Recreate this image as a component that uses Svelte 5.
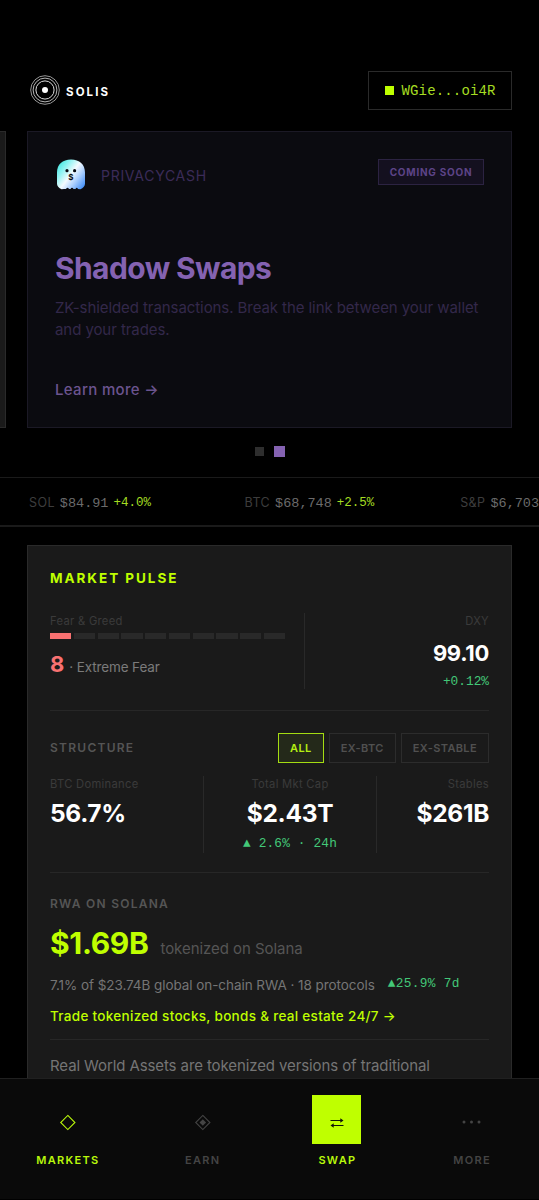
<script>
  const ticker = [
    { name: 'SOL', price: '$84.91', change: '+4.0%' },
    { name: 'BTC', price: '$68,748', change: '+2.5%' },
    { name: 'S&P', price: '$6,703', change: '' }
  ];
  const segments = Array.from({ length: 10 }, (_, i) => i < 1);
  const filters = ['ALL', 'EX-BTC', 'EX-STABLE'];
  let active = $state('ALL');
</script>

<div class="screen">
  <header>
    <div class="brand">
      <svg width="30" height="30" viewBox="0 0 30 30" fill="none" stroke="#fff">
        <circle cx="15" cy="15" r="14.3" stroke-width=".8" stroke="#bbb" />
        <circle cx="15" cy="15" r="11.9" stroke-width=".9" stroke="#ccc" />
        <circle cx="15" cy="15" r="9.1" stroke-width="1" stroke="#ddd" />
        <circle cx="15" cy="15" r="3" fill="#fff" stroke="none" />
      </svg>
      <span>SOLIS</span>
    </div>
    <button class="wallet"><i></i><span>WGie...oi4R</span></button>
  </header>

  <section class="slider">
    <div class="prev"></div>
    <article class="promo">
      <div class="promo-top">
        <svg class="ghost" width="30" height="32" viewBox="0 0 30 32">
          <defs>
            <linearGradient id="ghost" x1="0" y1="0.1" x2="1" y2="0.9">
              <stop offset="0" stop-color="#35e6de" />
              <stop offset=".25" stop-color="#8cf3f2" />
              <stop offset=".5" stop-color="#f4fbff" />
              <stop offset=".72" stop-color="#a9ceff" />
              <stop offset="1" stop-color="#3f8cf5" />
            </linearGradient>
          </defs>
          <path fill="url(#ghost)" d="M1 14.5C1 6.5 6.5 1.5 15 1.5S29 6.5 29 14.5V26Q28.5 29.5 24.5 31.2L22 31Q20.8 28.600 19.500 31H17.500Q16 28.600 14.500 31H13Q11.500 28.600 10 31H8L5.500 31.200Q1.500 29.500 1 26Z" />
          <circle cx="11" cy="12.7" r="1.6" fill="#080b12" />
          <circle cx="18.6" cy="12.7" r="1.6" fill="#080b12" />
          <text x="14.8" y="21.5" text-anchor="middle" font-family="Inter, sans-serif" font-size="8" font-weight="700" fill="#080b12">$</text>
        </svg>
        <span class="partner">PRIVACYCASH</span>
        <span class="soon">COMING SOON</span>
      </div>
      <h1>Shadow Swaps</h1>
      <p>ZK-shielded transactions. Break the link between your wallet and your trades.</p>
      <a class="learn" href="#learn">Learn more →</a>
    </article>
  </section>
  <div class="dots"><i></i><i class="on"></i></div>

  <div class="ticker">
    {#each ticker as t}
      <div><span class="name">{t.name}</span><span class="price">{t.price}</span>{#if t.change}<span class="change">{t.change}</span>{/if}</div>
    {/each}
  </div>

  <section class="pulse">
    <h2>MARKET PULSE</h2>
    <div class="mood">
      <div class="fear">
        <span class="label">Fear &amp; Greed</span>
        <div class="bar">{#each segments as on}<i class:on></i>{/each}</div>
        <div class="score"><b>8</b><span>· Extreme Fear</span></div>
      </div>
      <div class="dxy">
        <span class="label">DXY</span>
        <strong>99.10</strong>
        <span class="up">+0.12%</span>
      </div>
    </div>

    <div class="structure">
      <h3>STRUCTURE</h3>
      <div class="filters">
        {#each filters as f}
          <button class:active={active === f} onclick={() => (active = f)}>{f}</button>
        {/each}
      </div>
    </div>
    <div class="stats">
      <div><span class="label">BTC Dominance</span><strong>56.7%</strong></div>
      <div class="mid"><span class="label">Total Mkt Cap</span><strong>$2.43T</strong><span class="up">▲ 2.6% · 24h</span></div>
      <div class="end"><span class="label">Stables</span><strong>$261B</strong></div>
    </div>

    <div class="rwa">
      <h3>RWA ON SOLANA</h3>
      <div class="total"><b>$1.69B</b><span>tokenized on Solana</span></div>
      <div class="share"><span>7.1% of $23.74B global on-chain RWA · 18 protocols</span><span class="up">▲25.9% 7d</span></div>
      <a class="trade" href="#trade">Trade tokenized stocks, bonds &amp; real estate 24/7 →</a>
      <p>Real World Assets are tokenized versions of traditional</p>
    </div>
  </section>

  <nav>
    <a class="current" href="#markets">
      <span class="icon"><svg width="17" height="17" viewBox="0 0 16 16" fill="none" stroke="currentColor" stroke-width="1"><path d="M8.300 1.300 15 8 8.300 14.700 1.600 8Z" /></svg></span>
      <span class="tab">MARKETS</span>
    </a>
    <a href="#earn">
      <span class="icon"><svg width="17" height="17" viewBox="0 0 16 16" fill="none" stroke="currentColor" stroke-width="1"><path d="M8.300 1.300 15 8 8.300 14.700 1.600 8Z" /><path d="M8.300 4.900 11.400 8 8.300 11.100 5.200 8Z" fill="currentColor" stroke="none" /></svg></span>
      <span class="tab">EARN</span>
    </a>
    <a class="current" href="#swap">
      <span class="icon box"><svg width="14" height="12" viewBox="0 0 14 12" fill="none" stroke="#10150a" stroke-width="1"><path d="M.5 3.500H12M2 8.500H13.500" /><path d="M10.300 1.200 13.500 3.500 10.300 5.800ZM3.700 6.200.5 8.500 3.700 10.800Z" fill="#10150a" stroke="none" /></svg></span>
      <span class="tab">SWAP</span>
    </a>
    <a href="#more">
      <span class="icon"><svg width="19" height="5" viewBox="0 0 19 5" fill="currentColor"><circle cx="2" cy="2" r="1.5" /><circle cx="9.5" cy="2" r="1.5" /><circle cx="17" cy="2" r="1.5" /></svg></span>
      <span class="tab">MORE</span>
    </a>
  </nav>
</div>

<style>
  :global(body) { margin: 0; background: #000; overflow: hidden; }
  * { box-sizing: border-box; }
  .screen { display: flex; flex-direction: column; width: 539px; height: 1200px; overflow: hidden; background: #000; font-family: Inter, sans-serif; color: #fff; padding-top: 71px; }
  h1, h2, h3, p { margin: 0; }
  a { text-decoration: none; }
  i { display: block; }
  button { font: inherit; background: none; padding: 0; }
  header { display: flex; flex: none; height: 38px; padding: 0 27px 0 30px; justify-content: space-between; align-items: center; }
  .brand { display: flex; align-items: center; gap: 6px; font-size: 11.5px; font-weight: 700; letter-spacing: 2.1px; }
  .brand span { padding-top: 3px; }
  .wallet { display: flex; align-items: center; gap: 8px; width: 144.5px; height: 39px; padding-left: 16px; border: 1.5px solid #2a2a2a; color: #a6dd22; font: 14px "Liberation Mono", monospace; letter-spacing: .16px; }
  .wallet i { width: 9px; height: 9px; background: #bfff00; }
  .wallet span { padding-top: 2px; }

  .slider { display: flex; flex: none; gap: 21px; height: 297px; margin-top: 22px; }
  .prev { width: 6px; background: #1a1a1a; border: 1px solid #2a2a2a; border-left: 0; }
  .promo { width: 485px; border: 1px solid #1b1925; background: #0b0b10; padding: 27px 27px 0; display: flex; flex-direction: column; align-items: flex-start; }
  .promo-top { display: flex; width: 100%; height: 34px; align-items: center; }
  .ghost { margin: -4px 0 0 1px; }
  .partner { margin: -2px auto 0 15px; font-size: 14px; letter-spacing: .72px; color: #3b2b58; }
  .soon { align-self: flex-start; width: 106px; height: 26px; border: 1px solid #2c2342; background: #14101f; font-size: 10px; font-weight: 700; letter-spacing: .75px; line-height: 24px; text-align: center; white-space: nowrap; color: #5d4487; }
  h1 { margin-top: 56px; font-size: 30px; line-height: 38px; font-weight: 700; letter-spacing: -.6px; color: #8462b1; }
  .promo p { margin-top: 10px; width: 430px; font-size: 15px; line-height: 21.5px; letter-spacing: -.075px; color: #33284a; }
  .learn { margin-top: 39px; font-size: 15px; line-height: 22px; font-weight: 500; letter-spacing: .33px; color: #6b548f; }
  .dots { display: flex; flex: none; height: 12px; margin-top: 17px; gap: 10px; align-items: center; justify-content: center; }
  .dots i { width: 9px; height: 9px; background: #2e2e2e; }
  .dots .on { width: 11px; height: 11px; background: #8462b1; }

  .ticker { display: grid; grid-template-columns: repeat(3, 215.6px); flex: none; height: 50px; margin-top: 20px; padding: 2px 0 0 29px; border: solid #1a1a1a; border-width: 1px 0 2px; align-items: center; overflow: hidden; font-family: "Liberation Mono", monospace; white-space: nowrap; }
  .ticker div { display: flex; align-items: center; height: 20px; }
  .name { font: 12.5px Inter, sans-serif; letter-spacing: .4px; color: #3d3d3d; margin-right: 5px; }
  .price { font-size: 13.5px; color: #6b6b6b; margin-right: 5px; padding-top: 1px; }
  .change { font-size: 12.5px; color: #a4dc22; padding-top: 1px; }

  .pulse { flex: none; height: 533px; margin: 18px 27px 0; padding: 21px 22px 0; border: 1px solid #2a2a2a; border-bottom: 0; background: #1a1a1a; overflow: hidden; }
  h2 { font-size: 13.5px; line-height: 22px; font-weight: 700; letter-spacing: 1.95px; color: #bfff00; }
  .label { font-size: 11.2px; line-height: 16px; letter-spacing: .3px; color: #3b3b3b; }
  .up { font: 12.8px/18px "Liberation Mono", monospace; color: #43c878; }
  .mood { display: flex; height: 98px; margin-top: 24px; border-bottom: 1px solid #272727; }
  .fear { width: 255px; height: 76px; padding-right: 19px; border-right: 1px solid #292929; }
  .fear .label, .dxy .label { display: block; }
  .bar { display: flex; gap: 2.5px; height: 6px; margin-top: 4px; }
  .bar i { flex: 1; background: #292929; }
  .bar .on { background: #f87171; }
  .score { display: flex; align-items: baseline; gap: 5px; margin-top: 11px; line-height: 28px; }
  .score b { font-size: 22px; color: #f87171; }
  .score span { font-size: 13.5px; letter-spacing: -.13px; color: #7b7b7b; }
  .dxy { display: flex; flex: 1; flex-direction: column; align-items: flex-end; }
  strong { font-size: 24.5px; line-height: 30px; font-weight: 700; letter-spacing: -.35px; }
  .dxy strong { font-size: 22px; margin: 9px 0 5px; letter-spacing: -.3px; }

  .structure { display: flex; align-items: center; justify-content: space-between; margin-top: 22px; height: 30px; }
  h3 { font-size: 12px; line-height: 20px; font-weight: 600; letter-spacing: 1.25px; color: #555; }
  .filters { display: flex; gap: 5px; }
  .filters button { height: 30px; padding: 0 11px; border: 1.5px solid #2c2c2c; font-size: 11px; font-weight: 600; letter-spacing: .37px; color: #505050; }
  .filters .active { border-color: #a4dc12; background: #24291a; color: #b5ee12; }
  .stats { display: grid; grid-template-columns: 154px 173px 1fr; height: 97px; margin-top: 13px; padding-bottom: 21px; border-bottom: 1px solid #272727; }
  .stats div { display: flex; flex-direction: column; align-items: flex-start; border-right: 1px solid #292929; }
  .stats .mid { align-items: center; }
  .stats .end { align-items: flex-end; border: 0; }
  .stats strong { margin: 6px 0 7px; }
  .stats .up { letter-spacing: .15px; }

  .rwa { padding-top: 21px; }
  .total { display: flex; align-items: baseline; gap: 12px; margin-top: 10px; line-height: 38px; }
  .total b { font-size: 30px; letter-spacing: -.35px; color: #bfff00; }
  .total span { font-size: 15px; letter-spacing: -.05px; color: #555; }
  .share { display: flex; gap: 13px; margin-top: 6px; line-height: 22px; font-size: 13.5px; letter-spacing: -.06px; color: #757575; }
  .share .up { padding-top: 1px; letter-spacing: .32px; }
  .trade { display: block; margin-top: 9px; font-size: 13.5px; line-height: 22px; font-weight: 500; letter-spacing: .3px; color: #bfff00; }
  .rwa p { margin-top: 12px; padding-top: 15px; border-top: 1px solid #272727; font-size: 15px; line-height: 22px; letter-spacing: -.1px; color: #757575; white-space: nowrap; }

  nav { display: grid; grid-template-columns: repeat(4, 1fr); flex: none; height: 121px; padding-top: 16px; border-top: 1px solid #202020; background: #0a0a0a; }
  nav a { display: flex; flex-direction: column; align-items: center; gap: 8px; font-size: 11px; line-height: 16px; font-weight: 600; letter-spacing: 1.3px; color: #444; }
  .tab { padding-left: 1px; }
  .current { color: #b9f80b; }
  .icon { display: grid; place-items: center; width: 49px; height: 49px; padding-top: 5px; }
  .icon.box { background: #bfff00; padding-top: 7px; }
</style>
